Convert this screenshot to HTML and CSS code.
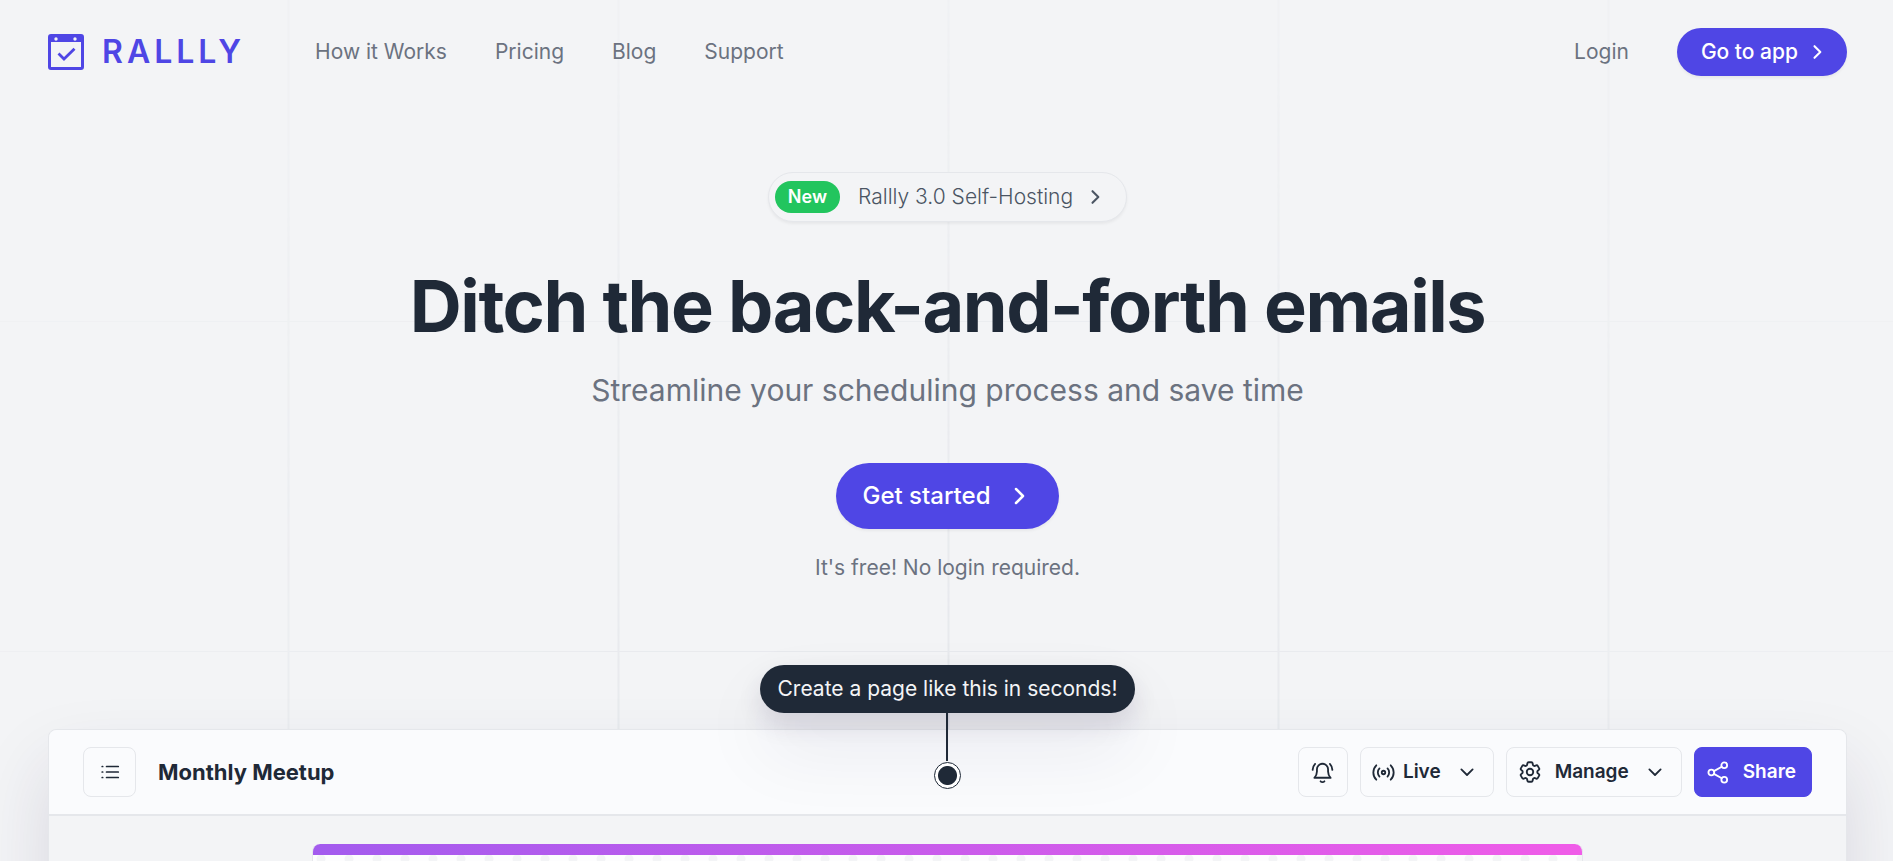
FILE: index.html
```html
<!DOCTYPE html>
<html lang="en">
<head>
<meta charset="utf-8">
<title>Rallly</title>
<link rel="stylesheet" href="styles.css">
</head>
<body>
<div class="backdrop" aria-hidden="true"></div>
<header class="site-header">
  <a class="logo" href="#">
    <svg class="logo-mark" viewBox="0 0 36 36" aria-hidden="true">
      <path fill="currentColor" fill-rule="evenodd" d="M3 0h30a3 3 0 0 1 3 3v30a3 3 0 0 1-3 3H3a3 3 0 0 1-3-3V3a3 3 0 0 1 3-3zM3 8v25h30V8zM8 3.300a1.700 1.700 0 1 0 0 3.400a1.700 1.700 0 0 0 0-3.400zM27 3.300a1.700 1.700 0 1 0 0 3.400a1.700 1.700 0 0 0 0-3.400z"/>
      <path fill="none" stroke="currentColor" stroke-width="2.800" d="M10.500 19.500l5.500 5.500L26.500 14.800"/>
    </svg>
    <span class="logo-text">RALLLY</span>
  </a>
  <nav class="nav">
    <a href="#">How it Works</a>
    <a href="#">Pricing</a>
    <a href="#">Blog</a>
    <a href="#">Support</a>
  </nav>
  <div class="account">
    <a class="login" href="#">Login</a>
    <a class="btn btn-app" href="#">Go to app
      <svg class="chevron" viewBox="0 0 24 24" aria-hidden="true"><path d="M9 5l7 7-7 7"/></svg>
    </a>
  </div>
</header>
<main>
  <section class="hero">
    <a class="announce" href="#">
      <span class="badge">New</span>
      <span>Rallly 3.0 Self-Hosting</span>
      <svg class="chevron" viewBox="0 0 24 24" aria-hidden="true"><path d="M9 5l7 7-7 7"/></svg>
    </a>
    <h1 class="title">Ditch the back-and-forth emails</h1>
    <p class="subtitle">Streamline your scheduling process and save time</p>
    <a class="btn btn-start" href="#">Get started
      <svg class="chevron chevron-lg" viewBox="0 0 24 24" aria-hidden="true"><path d="M9 5l7 7-7 7"/></svg>
    </a>
    <p class="note">It's free! No login required.</p>
  </section>
  <section class="preview">
    <div class="callout">
      <span class="callout-label">Create a page like this in seconds!</span>
      <span class="callout-line"></span>
      <span class="callout-dot"></span>
    </div>
    <div class="toolbar">
      <button class="tool tool-list" type="button" aria-label="Menu">
        <svg class="icon" viewBox="0 0 24 24" aria-hidden="true"><path d="M8.250 6H21M8.250 12H21M8.250 18H21M3.500 6h.5M3.500 12h.5M3.500 18h.5"/></svg>
      </button>
      <h2 class="poll-title">Monthly Meetup</h2>
      <div class="tools">
        <button class="tool tool-bell" type="button" aria-label="Notifications">
          <svg class="icon icon-lg" viewBox="0 0 24 24" aria-hidden="true"><path d="M3.500 17.500c1.700-1.700 2.700-3.700 2.700-6.500V8.700a5.800 5.800 0 0 1 11.600 0V11c0 2.800 1 4.800 2.700 6.500zM10 21.200c1 1 3 1 4 0M1.700 9.300c.2-2.700 1-4.700 2.600-6.300M22.300 9.300c-.2-2.700-1-4.700-2.600-6.300"/></svg>
        </button>
        <button class="tool tool-live" type="button">
          <svg class="icon icon-lg" viewBox="0 0 24 24" aria-hidden="true"><path d="M4.500 19.500a10.600 10.600 0 0 1 0-15M19.500 4.500a10.600 10.600 0 0 1 0 15M7.800 16.200a6 6 0 0 1 0-8.400M16.200 7.800a6 6 0 0 1 0 8.400"/><circle cx="12" cy="12" r="1.800"/></svg>
          <span>Live</span>
          <svg class="icon caret" viewBox="0 0 24 24" aria-hidden="true"><path d="M4.500 8.500l7.500 7.500 7.500-7.500"/></svg>
        </button>
        <button class="tool tool-manage" type="button">
          <svg class="icon icon-gear" viewBox="0 0 24 24" aria-hidden="true"><path d="M9.594 3.940c.090-.542.560-.940 1.110-.940h2.593c.550 0 1.020.398 1.110.940l.213 1.281c.063.374.313.686.645.870.074.040.147.083.220.127.324.196.720.257 1.075.124l1.217-.456a1.125 1.125 0 0 1 1.370.490l1.296 2.247a1.125 1.125 0 0 1-.260 1.431l-1.003.827c-.293.240-.438.613-.431.992a6.759 6.759 0 0 1 0 .255c-.007.378.138.750.430.990l1.005.828c.424.350.534.954.260 1.430l-1.298 2.247a1.125 1.125 0 0 1-1.369.491l-1.217-.456c-.355-.133-.750-.072-1.076.124a6.570 6.570 0 0 1-.220.128c-.331.183-.581.495-.644.869l-.213 1.280c-.090.543-.560.941-1.110.941h-2.594c-.550 0-1.020-.398-1.110-.940l-.213-1.281c-.062-.374-.312-.686-.644-.870a6.520 6.520 0 0 1-.220-.127c-.325-.196-.720-.257-1.076-.124l-1.217.456a1.125 1.125 0 0 1-1.369-.490l-1.297-2.247a1.125 1.125 0 0 1 .260-1.431l1.004-.827c.292-.240.437-.613.430-.992a6.932 6.932 0 0 1 0-.255c.007-.378-.138-.750-.430-.990l-1.004-.828a1.125 1.125 0 0 1-.260-1.430l1.297-2.247a1.125 1.125 0 0 1 1.370-.491l1.216.456c.356.133.751.072 1.076-.124.072-.044.146-.087.220-.128.332-.183.582-.495.644-.869l.214-1.281z"/><circle cx="12" cy="12" r="3"/></svg>
          <span>Manage</span>
          <svg class="icon caret" viewBox="0 0 24 24" aria-hidden="true"><path d="M4.500 8.500l7.500 7.500 7.500-7.500"/></svg>
        </button>
        <button class="tool tool-share" type="button">
          <svg class="icon icon-lg" viewBox="0 0 24 24" aria-hidden="true"><circle cx="4.500" cy="12" r="3"/><circle cx="18" cy="4.500" r="3"/><circle cx="18" cy="19.500" r="3"/><path d="M7.200 10.600l8.200-4.600M7.200 13.400l8.200 4.600"/></svg>
          <span>Share</span>
        </button>
      </div>
    </div>
    <div class="preview-body">
      <div class="poll-card"></div>
    </div>
  </section>
</main>
</body>
</html>
```

FILE: styles.css
```css
* { box-sizing: border-box; }

body {
  margin: 0;
  height: 100vh;
  overflow: hidden;
  position: relative;
  background: #f3f4f6;
  color: #1f2937;
  font-family: Inter, "Liberation Sans", sans-serif;
  font-size: 21px;
  line-height: 30px;
}

a { color: inherit; text-decoration: none; }
h1, h2, p { margin: 0; }
svg { display: block; flex: none; fill: none; stroke: currentColor; stroke-linecap: round; stroke-linejoin: round; }

.backdrop {
  position: absolute;
  inset: 0;
  z-index: -1;
  background-image:
    linear-gradient(to right, #e5e7eb 2px, transparent 2px),
    linear-gradient(to bottom, #e5e7eb 2px, transparent 2px);
  background-size: 330px 330px;
  background-position: calc(50% + 166px) -10px;
  mask-image: radial-gradient(ellipse 60% 90% at 50% 90%, #000, rgba(0, 0, 0, 0.200));
}

.site-header {
  display: flex;
  align-items: center;
  padding: 28px 46px 0 48px;
}
.logo { display: flex; align-items: center; gap: 18px; color: #4f46e5; }
.logo-mark { width: 36px; height: 36px; stroke: none; stroke-linecap: butt; stroke-linejoin: miter; }
.logo-text { font-size: 32px; font-weight: 600; letter-spacing: 4px; }
.nav { display: flex; gap: 48px; margin-left: 70px; color: #6b7280; }
.account { display: flex; align-items: center; gap: 48px; margin-left: auto; color: #6b7280; }

.btn {
  display: flex;
  align-items: center;
  border-radius: 99px;
  background: #4f46e5;
  color: #fff;
  font-weight: 500;
  box-shadow: 0 2px 3px rgba(0, 0, 0, 0.050);
}
.btn-app { height: 48px; gap: 9px; padding: 0 20px 0 24px; }
.chevron { width: 20px; height: 20px; stroke-width: 2.500; }

.hero {
  display: flex;
  flex-direction: column;
  align-items: center;
  padding: 96px 46px 0 48px;
  text-align: center;
}
.announce {
  display: flex;
  align-items: center;
  height: 50px;
  padding: 0 21px 0 6px;
  border: 1px solid #e5e7eb;
  border-radius: 99px;
  background: #f3f4f6;
  box-shadow: 0 2px 3px rgba(0, 0, 0, 0.050);
  color: #4b5563;
  font-weight: 300;
}
.announce .chevron { margin-left: 12px; }
.badge {
  margin-right: 18px;
  padding: 1px 13px;
  border-radius: 99px;
  background: #22c55e;
  color: #fff;
  font-size: 18px;
  font-weight: 600;
}
.title { margin-top: 48px; font-size: 72px; line-height: 72px; font-weight: 700; letter-spacing: -0.020em; }
.subtitle { margin-top: 24px; color: #6b7280; font-size: 30px; line-height: 48px; font-weight: 400; }
.btn-start { height: 66px; margin-top: 49px; padding: 0 28px 0 26px; gap: 16px; font-size: 24px; }
.chevron-lg { width: 24px; height: 24px; }
.note { margin-top: 24px; color: #6b7280; }

.preview {
  position: relative;
  margin: 146px 46px 0 48px;
  border: 1px solid #e5e7eb;
  border-radius: 8px;
  background: #f3f4f6;
  box-shadow: 0 36px 72px rgba(49, 30, 80, 0.130);
}
.toolbar {
  display: flex;
  align-items: center;
  height: 86px;
  padding: 0 34px;
  border-bottom: 2px solid #e5e7eb;
  border-radius: 8px 8px 0 0;
  background: #fafbfd;
}
.poll-title { margin-left: 22px; font-size: 22px; font-weight: 700; }
.tools { display: flex; gap: 12px; margin-left: auto; }
.tool {
  display: flex;
  align-items: center;
  justify-content: center;
  height: 50px;
  padding: 0;
  border: 1px solid #e5e7eb;
  border-radius: 8px;
  background: transparent;
  color: #1f2937;
  font: 600 19px/30px Inter, "Liberation Sans", sans-serif;
}
.icon { width: 22px; height: 22px; stroke-width: 1.900; }
.icon-lg { width: 23px; height: 23px; }
.icon-gear { width: 26px; height: 26px; stroke-width: 1.700; }
.caret { width: 18px; height: 18px; stroke-width: 2.400; }
.tool-list { width: 53px; }
.tool-bell { width: 50px; }
.tool-live { padding: 0 17px 0 11px; gap: 8px; }
.tool-live .caret { margin-left: 9px; }
.tool-manage { padding: 0 17px 0 10px; gap: 12px; }
.tool-manage .caret { margin-left: 5px; }
.tool-share { padding: 0 15px 0 12px; gap: 13px; border-color: #4f46e5; background: #4f46e5; color: #fff; }

.callout {
  position: absolute;
  top: -65px;
  left: 50%;
  transform: translateX(-50%);
  display: flex;
  flex-direction: column;
  align-items: center;
}
.callout-label {
  padding: 9px 18px;
  border-radius: 99px;
  background: #1f2937;
  color: #f3f4f6;
  white-space: nowrap;
  box-shadow: 0 36px 72px rgba(31, 20, 60, 0.080), 0 12px 24px rgba(49, 30, 80, 0.120);
}
.callout-line { width: 2px; height: 48px; background: #1f2937; }
.callout-dot {
  width: 27px;
  height: 27px;
  margin-top: 1px;
  border: 1px solid #1f2937;
  border-radius: 50%;
  background: radial-gradient(circle, #1f2937 9px, #fff 10px);
}

.preview-body { padding: 28px 263px 0; }
.poll-card {
  height: 240px;
  border: 1px solid #e5e7eb;
  border-top: 0;
  border-radius: 8px 8px 0 0;
  background:
    linear-gradient(to right, #a35bee, #f05ce8) top / 100% 11px no-repeat border-box,
    radial-gradient(circle at 14px 4px, #f3f4f6 4px, transparent 5px) -6px 11px / 28px 28px,
    #fdfdfe;
}
```
